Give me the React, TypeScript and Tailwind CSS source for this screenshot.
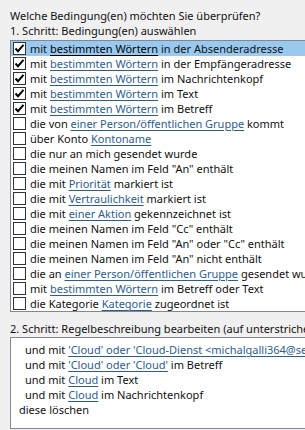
import React from "react";

type Seg = string | { l: string };

const rows: { checked: boolean; parts: Seg[] }[] = [
  { checked: true, parts: ["mit ", { l: "bestimmten Wörtern" }, " in der Absenderadresse"] },
  { checked: true, parts: ["mit ", { l: "bestimmten Wörtern" }, " in der Empfängeradresse"] },
  { checked: true, parts: ["mit ", { l: "bestimmten Wörtern" }, " im Nachrichtenkopf"] },
  { checked: true, parts: ["mit ", { l: "bestimmten Wörtern" }, " im Text"] },
  { checked: true, parts: ["mit ", { l: "bestimmten Wörtern" }, " im Betreff"] },
  { checked: false, parts: ["die von ", { l: "einer Person/öffentlichen Gruppe" }, " kommt"] },
  { checked: false, parts: ["über Konto ", { l: "Kontoname" }] },
  { checked: false, parts: ["die nur an mich gesendet wurde"] },
  { checked: false, parts: ['die meinen Namen im Feld "An" enthält'] },
  { checked: false, parts: ["die mit ", { l: "Priorität" }, " markiert ist"] },
  { checked: false, parts: ["die mit ", { l: "Vertraulichkeit" }, " markiert ist"] },
  { checked: false, parts: ["die mit ", { l: "einer Aktion" }, " gekennzeichnet ist"] },
  { checked: false, parts: ['die meinen Namen im Feld "Cc" enthält'] },
  { checked: false, parts: ['die meinen Namen im Feld "An" oder "Cc" enthält'] },
  { checked: false, parts: ['die meinen Namen im Feld "An" nicht enthält'] },
  { checked: false, parts: ["die an ", { l: "einer Person/öffentlichen Gruppe" }, " gesendet wurde"] },
  { checked: false, parts: ["mit ", { l: "bestimmten Wörtern" }, " im Betreff oder Text"] },
  { checked: false, parts: ["die Kategorie ", { l: "Kategorie" }, " zugeordnet ist"] },
];

const desc: { indent: boolean; parts: Seg[] }[] = [
  { indent: true, parts: ["und mit ", { l: "'Cloud' oder 'Cloud-Dienst <michalgalli364@service.de>'" }] },
  { indent: true, parts: ["und mit ", { l: "'Cloud' oder 'Cloud'" }, " im Betreff"] },
  { indent: true, parts: ["und mit ", { l: "Cloud" }, " im Text"] },
  { indent: true, parts: ["und mit ", { l: "Cloud" }, " im Nachrichtenkopf"] },
  { indent: false, parts: ["diese löschen"] },
];

function Parts({ parts, selected }: { parts: Seg[]; selected?: boolean }) {
  return (
    <>
      {parts.map((p, i) =>
        typeof p === "string" ? (
          <span key={i}>{p}</span>
        ) : (
          <span
            key={i}
            className={
              selected
                ? "underline underline-offset-2 decoration-1 text-black"
                : "underline underline-offset-2 decoration-1 text-[#2b5d93]"
            }
          >
            {p.l}
          </span>
        )
      )}
    </>
  );
}

function Check({ checked }: { checked: boolean }) {
  return (
    <div className="w-[13px] h-[13px] shrink-0 border border-[#333333] bg-white flex items-center justify-center">
      {checked && (
        <svg width="11" height="11" viewBox="0 0 11 11">
          <path d="M1.5 5.5 L4 8.2 L9.5 1.8" fill="none" stroke="#000" strokeWidth="2" />
        </svg>
      )}
    </div>
  );
}

export default function App() {
  return (
    <div
      className="w-[305px] h-[430px] bg-[#f0f0f0] overflow-hidden text-[11px] leading-[15px] text-[#111] pl-[10px] pt-[8px]"
      style={{ fontFamily: '"Segoe UI", "Noto Sans", sans-serif' }}
    >
      <div className="whitespace-nowrap">Welche Bedingung(en) möchten Sie überprüfen?</div>
      <div className="whitespace-nowrap">1. Schritt: Bedingung(en) auswählen</div>
      <div className="mt-[2px] w-[320px] border border-[#828790] bg-white">
        {rows.map((r, i) => (
          <div
            key={i}
            className={
              "h-[15px] flex items-center gap-[4px] pl-[2px] whitespace-nowrap " +
              (i === 0 ? "bg-[#99c9ef]" : "")
            }
          >
            <Check checked={r.checked} />
            <div className="whitespace-nowrap">
              <Parts parts={r.parts} selected={i === 0} />
            </div>
          </div>
        ))}
      </div>
      <div className="mt-[9px] whitespace-nowrap">
        2. Schritt: Regelbeschreibung bearbeiten (auf unterstrichene Werte klicken)
      </div>
      <div className="mt-[1px] w-[320px] h-[92px] border border-[#828790] bg-white pt-[4px]">
        {desc.map((d, i) => (
          <div key={i} className={"whitespace-nowrap h-[15px] " + (d.indent ? "pl-[14px]" : "pl-[8px]")}>
            <Parts parts={d.parts} />
          </div>
        ))}
      </div>
    </div>
  );
}
